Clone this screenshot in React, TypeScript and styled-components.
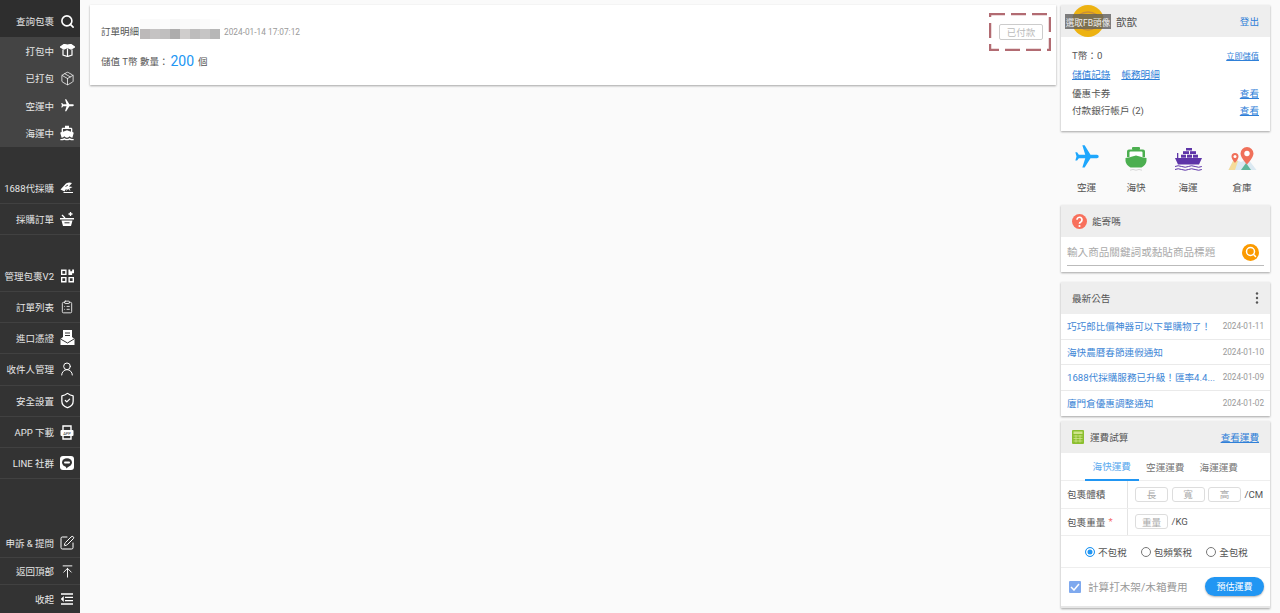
import React from "react";
import styled, { createGlobalStyle } from "styled-components";
import { MdDirectionsBoat, MdFlight } from "react-icons/md";
import {
  ArrowUpToLine,
  ClipboardList,
  Package,
  Search,
  ShieldCheck,
  SquarePen,
  UserRound,
} from "lucide-react";

const GlobalStyle = createGlobalStyle`
  html, body {
    margin: 0;
    padding: 0;
    height: 613px;
    overflow: hidden;
    background: #fafafa;
    font-family: Roboto, "Noto Sans CJK TC", "Liberation Sans", sans-serif;
  }
  * { box-sizing: border-box; }
`;

const Page = styled.div`
  display: flex;
  width: 1280px;
  height: 613px;
`;

const Sidebar = styled.nav`
  width: 80px;
  height: 613px;
  flex-shrink: 0;
  display: flex;
  flex-direction: column;
  background: #333;
  color: #e6e6e6;
`;

const NavGroup = styled.div<{ $light?: boolean; $gap?: number; $bottom?: boolean }>`
  background: ${(p) => (p.$light ? "#444" : "transparent")};
  margin-top: ${(p) => (p.$bottom ? "auto" : `${p.$gap ?? 0}px`)};
`;

const NavItem = styled.div<{ $h: number; $top?: number; $dark?: boolean; $line?: boolean }>`
  height: ${(p) => p.$h}px;
  padding-top: ${(p) => p.$top ?? 0}px;
  padding-right: 3px;
  display: flex;
  align-items: center;
  justify-content: flex-end;
  gap: 3px;
  font-size: 9.5px;
  white-space: nowrap;
  background: ${(p) => (p.$dark ? "#2e2e2e" : "transparent")};
  border-bottom: ${(p) => (p.$line ? "1px solid #414141" : "none")};
`;

const NavIcon = styled.span`
  width: 20px;
  height: 20px;
  display: flex;
  align-items: center;
  justify-content: center;
  color: #fff;
`;

const PlaneIcon = styled(MdFlight)`
  transform: rotate(90deg);
  flex-shrink: 0;
`;

const Main = styled.main`
  flex: 1;
  padding: 5px 5px 0 10px;
`;

const OrderCard = styled.section`
  position: relative;
  height: 80px;
  background: #fff;
  box-shadow: 0 1px 2px rgba(0, 0, 0, 0.35);
  padding: 14px 11px;
  color: #555;
  font-size: 9.5px;
`;

const OrderTitle = styled.div`
  display: flex;
  align-items: flex-end;
  height: 20px;
  line-height: 14px;
`;

const Mosaic = styled.div`
  display: grid;
  grid-template-columns: repeat(8, 10px);
  grid-template-rows: 10px 10px;
  margin: 0 4px 0 1px;
`;

const MosaicCell = styled.span<{ $c: string }>`
  background: ${(p) => p.$c};
`;

const OrderTime = styled.span`
  color: #999;
  font-size: 8.3px;
`;

const OrderLine = styled.div`
  margin-top: 11px;
  display: flex;
  align-items: center;
  height: 22px;
`;

const BigNumber = styled.span`
  color: #2196f3;
  font-size: 14px;
  margin: 0 4px 0 2px;
`;

const PaidMark = styled.div`
  position: absolute;
  top: 8px;
  right: 5px;
  width: 62px;
  height: 38px;
  display: flex;
  align-items: center;
  justify-content: flex-end;
  padding-right: 8px;
`;

const PaidOutline = styled.svg`
  position: absolute;
  inset: 0;
`;

const PaidTag = styled.span`
  width: 44px;
  height: 16px;
  border: 1px solid #ccc;
  border-radius: 2px;
  color: #bbb;
  font-size: 9.5px;
  display: flex;
  align-items: center;
  justify-content: center;
`;

const RightColumn = styled.aside`
  width: 219px;
  flex-shrink: 0;
  padding: 5px 10px 0 0;
  display: flex;
  flex-direction: column;
`;

const Card = styled.section<{ $mb?: number }>`
  flex-shrink: 0;
  background: #fff;
  box-shadow: 0 1px 2px rgba(0, 0, 0, 0.35);
  margin-bottom: ${(p) => p.$mb ?? 10}px;
  color: #555;
  font-size: 9.6px;
`;

const CardHeader = styled.header<{ $h?: number }>`
  height: ${(p) => p.$h ?? 32}px;
  background: #eee;
  display: flex;
  align-items: center;
  padding: 0 11px;
  color: #555;
  font-size: 9.6px;
`;

const Spread = styled.div`
  flex: 1;
`;

const BlueLink = styled.a<{ $small?: boolean }>`
  color: #2f80d8;
  text-decoration: underline;
  font-size: ${(p) => (p.$small ? "8.2px" : "9.6px")};
`;

const PlainLink = styled.a`
  color: #2f80d8;
  font-size: 9.6px;
`;

const AvatarWrap = styled.div`
  position: relative;
  width: 46px;
  height: 32px;
  margin: 0 5px 0 -7px;
  display: flex;
  justify-content: center;
`;

const AvatarLabel = styled.span`
  position: absolute;
  left: 0;
  top: 9px;
  width: 46px;
  height: 15px;
  background: rgba(95, 95, 95, 0.8);
  color: #eee;
  font-size: 8.6px;
  display: flex;
  align-items: center;
  justify-content: center;
  white-space: nowrap;
`;

const UserName = styled.span`
  font-size: 10.5px;
`;

const UserBody = styled.div`
  height: 94px;
  padding: 9px 11px 0;
`;

const UserRow = styled.div<{ $h: number }>`
  height: ${(p) => p.$h}px;
  display: flex;
  align-items: center;
  justify-content: space-between;
`;

const LinkGroup = styled.div`
  display: flex;
  gap: 11px;
`;

const TransportRow = styled.div`
  flex-shrink: 0;
  height: 50px;
  margin-bottom: 10px;
  display: grid;
  grid-template-columns: 51px 48px 56px 52px;
  justify-items: center;
`;

const TransportItem = styled.div`
  display: flex;
  flex-direction: column;
  align-items: center;
  gap: 9px;
  color: #555;
  font-size: 9.6px;
`;

const TransportIcon = styled.div`
  width: 30px;
  height: 26px;
  display: flex;
  align-items: flex-end;
  justify-content: center;
`;

const HelpTitle = styled.span`
  margin-left: 5px;
`;

const SearchRow = styled.div`
  height: 35px;
  padding: 0 6px;
`;

const SearchInner = styled.div`
  height: 29px;
  border-bottom: 1px solid #bbb;
  display: flex;
  align-items: center;
  justify-content: space-between;
  color: #aaa;
  font-size: 10.6px;
  padding-right: 5px;
`;

const SearchBadge = styled.span`
  width: 17px;
  height: 17px;
  border-radius: 50%;
  background: #fb9a00;
  color: #fff;
  display: flex;
  align-items: center;
  justify-content: center;
  margin-top: 2px;
`;

const NewsRow = styled.div<{ $last?: boolean }>`
  height: 25.5px;
  display: flex;
  align-items: center;
  justify-content: space-between;
  padding: 0 6px;
  border-bottom: ${(p) => (p.$last ? "none" : "1px solid #eaeaea")};
`;

const NewsTitle = styled.span`
  color: #3d86d6;
  font-size: 9.6px;
  white-space: nowrap;
`;

const NewsDate = styled.span`
  color: #999;
  font-size: 8.2px;
`;

const CalcIcon = styled.div`
  margin-right: 6px;
  display: flex;
`;

const CalcCard = styled(Card)`
  margin-bottom: 0;
  height: 187px;
  border-bottom: 2px solid #e6e6e6;
`;

const Tabs = styled.div`
  height: 28px;
  display: flex;
  padding-left: 24px;
  border-bottom: 1px solid #eee;
`;

const Tab = styled.div<{ $active?: boolean }>`
  width: 53.5px;
  display: flex;
  align-items: center;
  justify-content: center;
  color: ${(p) => (p.$active ? "#5aa9ee" : "#777")};
  font-size: 9.6px;
  border-bottom: ${(p) => (p.$active ? "2px solid #2196f3" : "none")};
  margin-bottom: -1px;
`;

const FormRow = styled.div`
  height: 27.5px;
  display: flex;
  border-bottom: 1px solid #eee;
`;

const FormLabel = styled.div`
  width: 67px;
  padding-left: 6px;
  display: flex;
  align-items: center;
  border-right: 1px solid #e4e4e4;
`;

const Required = styled.span`
  color: #f56c6c;
  margin-left: 3px;
`;

const FormFields = styled.div`
  flex: 1;
  padding-left: 7px;
  display: flex;
  align-items: center;
  gap: 3.5px;
`;

const FieldBox = styled.span`
  width: 33px;
  height: 15px;
  border: 1px solid #ddd;
  border-radius: 3px;
  color: #aaa;
  display: flex;
  align-items: center;
  justify-content: center;
  font-size: 9.6px;
`;

const RadioRow = styled.div`
  height: 32px;
  display: flex;
  align-items: center;
  padding-left: 24px;
  gap: 14px;
  border-bottom: 1px solid #eee;
`;

const RadioItem = styled.label`
  display: flex;
  align-items: center;
  gap: 3px;
`;

const RadioDot = styled.span<{ $on?: boolean }>`
  width: 10px;
  height: 10px;
  border-radius: 50%;
  border: 1px solid ${(p) => (p.$on ? "#2196f3" : "#777")};
  background: ${(p) => (p.$on ? "#2196f3" : "#fff")};
  box-shadow: ${(p) => (p.$on ? "inset 0 0 0 1.5px #fff" : "none")};
`;

const SubmitRow = styled.div`
  height: 37px;
  display: flex;
  align-items: center;
  padding: 0 6px 0 8px;
  color: #999;
  font-size: 10.6px;
`;

const CheckBox = styled.span`
  width: 12px;
  height: 12px;
  margin-right: 7px;
  background: #7fa9ee;
  border-radius: 1px;
  display: flex;
  align-items: center;
  justify-content: center;
`;

const EstimateButton = styled.button`
  margin-left: auto;
  width: 59px;
  height: 19px;
  border: none;
  border-radius: 10px;
  background: #2196f3;
  color: #fff;
  font: inherit;
  font-size: 9px;
  padding: 0;
  box-shadow: 0 1px 2px rgba(0, 0, 0, 0.3);
`;

const AvatarFace = () => (
  <svg width="32" height="32" viewBox="0 0 32 32" fill="none">
    <circle cx="16" cy="16" r="16" fill="#edb211" />
    <path d="M7 10q9-6 18 0M8 22q8 6 16 0" stroke="#c98f3a" strokeWidth="1.5" />
  </svg>
);

const OpenBoxIcon = () => (
  <svg width="15" height="13" viewBox="0 0 15 13" fill="none" stroke="#fff" strokeWidth="1.200">
    <path d="M7.500 1 11 .5 14.500 3 11 5 7.500 3.500 4 5 .5 3 4 .5z" fill="#fff" />
    <path d="M3 5.500V11l4.500 1.500L12 11V5.500M7.500 4.500v8" />
  </svg>
);

const Purchase1688 = () => (
  <svg width="14" height="13" viewBox="0 0 14 13" fill="#fff">
    <path d="M0.500 7.500 6 1.500Q9 0 12 1L9 4.500 12.500 5 9 7H6L4.500 9.500z" />
    <path d="M3.500 10.500h9.500M6.500 8.500a1.700 1.700 0 1 1 3.400 0" stroke="#fff" strokeWidth="1" fill="none" />
    <path d="M5.500 4.500 8 3" stroke="#333" strokeWidth="0.900" />
  </svg>
);

const BasketIcon = () => (
  <svg width="14" height="14" viewBox="0 0 14 14" fill="#fff" stroke="none">
    <path d="M10.500 0v4M8.500 2h4M2 3l3 3" stroke="#fff" strokeWidth="1.300" />
    <path d="M0 6h14v1.500H0z" />
    <path d="M1.500 8.500h11L11 14H3z" />
    <path d="M4.500 10.800h5" stroke="#333" strokeWidth="1" />
  </svg>
);

const QrIcon = () => (
  <svg width="13" height="14" viewBox="0 0 14 14" fill="#fff">
    <path d="M0 0h6v6H0z M1.500 1.500v3h3v-3z" fillRule="evenodd" />
    <path d="M8 0h2v2h2V0h2v4h-2v2H8z" />
    <path d="M0 8h6v6H0z M1.500 9.500v3h3v-3z" fillRule="evenodd" />
    <path d="M8 8h6v6H8z M9.500 9.500v3h3v-3z" fillRule="evenodd" />
  </svg>
);

const VoucherIcon = () => (
  <svg width="15" height="16" viewBox="0 0 15 16" fill="#fff">
    <path d="M3 0h9v7l2.500 2v6H.5V9L3 7z" />
    <path d="M5 3h5M5 5.500h5" stroke="#333" strokeWidth="1" />
    <path d="M.5 9l7 4 6.500-4" stroke="#333" strokeWidth="1" fill="none" />
  </svg>
);

const AppIcon = () => (
  <svg width="14" height="15" viewBox="0 0 14 15" fill="none" stroke="#fff" strokeWidth="1.400">
    <path d="M3 5V1h8v4" />
    <rect x="0.500" y="5" width="13" height="6" rx="1" fill="#fff" stroke="none" />
    <path d="M3 11v3h8v-3" />
    <text x="7" y="9.500" textAnchor="middle" fontSize="4" fill="#333" stroke="none">APP</text>
  </svg>
);

const LineIcon = () => (
  <svg width="14" height="14" viewBox="0 0 14 14">
    <rect width="14" height="14" rx="3" fill="#fff" />
    <ellipse cx="7" cy="6.500" rx="5" ry="4.200" fill="#333" />
    <path d="M5.500 10l1 2.500 2.500-2.500z" fill="#333" />
    <rect x="4" y="5.500" width="6" height="2" rx="1" fill="#fff" />
  </svg>
);

const CollapseIcon = () => (
  <svg width="14" height="12" viewBox="0 0 14 12" fill="none" stroke="#fff" strokeWidth="1.300">
    <path d="M1 1h12M5 4.300h8M5 7.600h8M1 11h12" />
    <path d="M3.500 3.500 1 6l2.500 2.500z" fill="#fff" strokeWidth="0.500" />
  </svg>
);

const GreenShip = () => (
  <svg width="22" height="24" viewBox="0 0 22 24">
    <rect x="7" y="0" width="8" height="3" rx="1" fill="#4caf50" />
    <path d="M4 2.500h14a2 2 0 0 1 2 2V10H2V4.500a2 2 0 0 1 2-2z" fill="#4caf50" />
    <path d="M0.500 11 11 9l10.500 2v3c0 2.500-2.500 5-5 6.500h-11c-2.500-1.500-5-4-5-6.500z" fill="#4caf50" />
    <path d="M5.500 4.500h11a1 1 0 0 1 1 1v4.800L11 8.500 4.500 10.300V5.500a1 1 0 0 1 1-1z" fill="#fff" />
    <path d="M5 23.200q3-1.500 6 0q3-1.500 6 0" stroke="#ccc" strokeWidth="0.800" fill="none" />
  </svg>
);

const PurpleShip = () => (
  <svg width="27" height="23" viewBox="0 0 27 23" fill="#5e35a8">
    <rect x="11" y="0" width="6" height="2.500" />
    <rect x="8" y="3.200" width="6" height="2.800" />
    <rect x="15" y="3.200" width="6" height="2.800" />
    <rect x="2" y="5" width="1.300" height="5" />
    <rect x="6" y="6.700" width="5" height="3" />
    <rect x="12" y="6.700" width="5" height="3" />
    <rect x="18" y="6.700" width="5" height="3" />
    <path d="M0 10h27l-3 6.500H3z" />
    <path d="M0 18.500q3-1.500 6.700 0t6.700 0 6.700 0 6.700 0" stroke="#5e35a8" strokeWidth="1" fill="none" />
    <path d="M0 21.500q3-1.500 6.700 0t6.700 0 6.700 0 6.700 0" stroke="#5e35a8" strokeWidth="1" fill="none" />
  </svg>
);

const MapPins = () => (
  <svg width="29" height="24" viewBox="0 0 29 24">
    <path d="M0.500 23 6 12l7 3 7-3 8.500 11z" fill="#dbe9f2" />
    <path d="M0.500 23 6 12l4 2-3 9z" fill="#f5dc9a" />
    <path d="M13 23l5-7 5 7z" fill="#5fb59a" />
    <path d="M7 6a3.500 3.500 0 0 1 3.500 3.500C10.500 12 7 16 7 16s-3.500-4-3.500-6.500A3.500 3.500 0 0 1 7 6z" fill="#f0705a" />
    <circle cx="7" cy="9.500" r="1.500" fill="#fff" />
    <path d="M19 0a6.500 6.500 0 0 1 6.500 6.500c0 4-6.500 11-6.500 11s-6.500-7-6.500-11A6.500 6.500 0 0 1 19 0z" fill="#f0705a" />
    <circle cx="19" cy="6.500" r="2.700" fill="#fff" />
  </svg>
);

const HelpIcon = () => (
  <svg width="15" height="15" viewBox="0 0 15 15">
    <circle cx="7.500" cy="7.500" r="7.500" fill="#f8705c" />
    <path d="M5 5.800a2.500 2.500 0 1 1 3.800 2.100c-.9.500-1.300.9-1.300 1.800" stroke="#fff" strokeWidth="1.700" fill="none" />
    <circle cx="7.500" cy="12" r="1.100" fill="#fff" />
  </svg>
);

const DotsIcon = () => (
  <svg width="4" height="12" viewBox="0 0 4 12" fill="#555">
    <circle cx="2" cy="1.500" r="1.200" />
    <circle cx="2" cy="6" r="1.200" />
    <circle cx="2" cy="10.500" r="1.200" />
  </svg>
);

const CalculatorIcon = () => (
  <svg width="12" height="14" viewBox="0 0 12 14">
    <rect width="12" height="14" rx="1" fill="#8bbf2f" />
    <rect x="1.500" y="1.500" width="9" height="2.500" fill="#cfe58a" />
    <path d="M1.500 6h9M1.500 8.500h9M1.500 11h9M4 5v7.500M8 5v7.500" stroke="#cfe58a" strokeWidth="0.800" />
  </svg>
);

const CheckMark = () => (
  <svg width="10" height="8" viewBox="0 0 10 8" fill="none" stroke="#fff" strokeWidth="1.500">
    <path d="M1 4l3 3 5-6" />
  </svg>
);

const mosaic = [
  "#fbfbfb", "#fafafa", "#fcfcfc", "#f8f8f8", "#fafafa", "#f9f9f9", "#fbfbfb", "#fdfdfd",
  "#bcb9b9", "#c5c3c3", "#c0bfbf", "#adacac", "#cfcdcc", "#bdbcbc", "#c6c5c5", "#b7b7b7",
];

const news = [
  { title: "巧巧郎比價神器可以下單購物了！", date: "2024-01-11" },
  { title: "海快農曆春節連假通知", date: "2024-01-10" },
  { title: "1688代採購服務已升級！匯率4.4...", date: "2024-01-09" },
  { title: "廈門倉優惠調整通知", date: "2024-01-02" },
];

export default function App() {
  return (
    <Page>
      <GlobalStyle />
      <Sidebar>
        <NavItem $h={37} $top={5} $dark>
          查詢包裹<NavIcon><Search size={15} strokeWidth={2.6} /></NavIcon>
        </NavItem>
        <NavGroup $light>
          <NavItem $h={27.5}>打包中<NavIcon><OpenBoxIcon /></NavIcon></NavItem>
          <NavItem $h={27.5}>已打包<NavIcon><Package size={15} strokeWidth={1.2} /></NavIcon></NavItem>
          <NavItem $h={27.5}>空運中<NavIcon><PlaneIcon size={15} /></NavIcon></NavItem>
          <NavItem $h={27.5}>海運中<NavIcon><MdDirectionsBoat size={16} /></NavIcon></NavItem>
        </NavGroup>
        <NavGroup $gap={26}>
          <NavItem $h={31} $line>1688代採購<NavIcon><Purchase1688 /></NavIcon></NavItem>
          <NavItem $h={31} $line>採購訂單<NavIcon><BasketIcon /></NavIcon></NavItem>
        </NavGroup>
        <NavGroup $gap={25}>
          <NavItem $h={32} $line>管理包裹V2<NavIcon><QrIcon /></NavIcon></NavItem>
          <NavItem $h={31} $line>訂單列表<NavIcon><ClipboardList size={14} strokeWidth={1.4} /></NavIcon></NavItem>
          <NavItem $h={31} $line>進口憑證<NavIcon><VoucherIcon /></NavIcon></NavItem>
          <NavItem $h={31.5} $line>收件人管理<NavIcon><UserRound size={16} strokeWidth={1.5} /></NavIcon></NavItem>
          <NavItem $h={31.5} $line>安全設置<NavIcon><ShieldCheck size={17} strokeWidth={1.8} /></NavIcon></NavItem>
          <NavItem $h={31} $line>APP 下載<NavIcon><AppIcon /></NavIcon></NavItem>
          <NavItem $h={31} $line>LINE 社群<NavIcon><LineIcon /></NavIcon></NavItem>
        </NavGroup>
        <NavGroup $bottom>
          <NavItem $h={29} $line>申訴 &amp; 提問<NavIcon><SquarePen size={16} strokeWidth={1.5} /></NavIcon></NavItem>
          <NavItem $h={27} $line>返回頂部<NavIcon><ArrowUpToLine size={15} strokeWidth={1.5} /></NavIcon></NavItem>
          <NavItem $h={28}>收起<NavIcon><CollapseIcon /></NavIcon></NavItem>
        </NavGroup>
      </Sidebar>

      <Main>
        <OrderCard>
          <OrderTitle>
            訂單明細
            <Mosaic>
              {mosaic.map((c, i) => (
                <MosaicCell key={i} $c={c} />
              ))}
            </Mosaic>
            <OrderTime>2024-01-14 17:07:12</OrderTime>
          </OrderTitle>
          <OrderLine>
            儲值 T幣 數量：<BigNumber>200</BigNumber>個
          </OrderLine>
          <PaidMark>
            <PaidOutline width="62" height="38" viewBox="0 0 62 38" fill="none">
              <rect x="1" y="1" width="60" height="36" stroke="#b26b72" strokeWidth="2.500" strokeDasharray="15 6" />
            </PaidOutline>
            <PaidTag>已付款</PaidTag>
          </PaidMark>
        </OrderCard>
      </Main>

      <RightColumn>
        <Card $mb={14}>
          <CardHeader>
            <AvatarWrap>
              <AvatarFace />
              <AvatarLabel>選取FB頭像</AvatarLabel>
            </AvatarWrap>
            <UserName>歆歆</UserName>
            <Spread />
            <PlainLink>登出</PlainLink>
          </CardHeader>
          <UserBody>
            <UserRow $h={17}>
              <span>T幣：0</span>
              <BlueLink $small>立即儲值</BlueLink>
            </UserRow>
            <UserRow $h={21}>
              <LinkGroup>
                <BlueLink>儲值記錄</BlueLink>
                <BlueLink>帳務明細</BlueLink>
              </LinkGroup>
            </UserRow>
            <UserRow $h={18}>
              <span>優惠卡券</span>
              <BlueLink>查看</BlueLink>
            </UserRow>
            <UserRow $h={16}>
              <span>付款銀行帳戶 (2)</span>
              <BlueLink>查看</BlueLink>
            </UserRow>
          </UserBody>
        </Card>

        <TransportRow>
          <TransportItem><TransportIcon><PlaneIcon size={28} color="#1ea7fd" /></TransportIcon>空運</TransportItem>
          <TransportItem><TransportIcon><GreenShip /></TransportIcon>海快</TransportItem>
          <TransportItem><TransportIcon><PurpleShip /></TransportIcon>海運</TransportItem>
          <TransportItem><TransportIcon><MapPins /></TransportIcon>倉庫</TransportItem>
        </TransportRow>

        <Card>
          <CardHeader>
            <HelpIcon />
            <HelpTitle>能寄嗎</HelpTitle>
          </CardHeader>
          <SearchRow>
            <SearchInner>
              輸入商品關鍵詞或黏貼商品標題
              <SearchBadge><Search size={12} strokeWidth={3} /></SearchBadge>
            </SearchInner>
          </SearchRow>
        </Card>

        <Card $mb={5}>
          <CardHeader>
            最新公告
            <Spread />
            <DotsIcon />
          </CardHeader>
          {news.map((n, i) => (
            <NewsRow key={n.date} $last={i === news.length - 1}>
              <NewsTitle>{n.title}</NewsTitle>
              <NewsDate>{n.date}</NewsDate>
            </NewsRow>
          ))}
        </Card>

        <CalcCard>
          <CardHeader>
            <CalcIcon><CalculatorIcon /></CalcIcon>
            運費試算
            <Spread />
            <BlueLink>查看運費</BlueLink>
          </CardHeader>
          <Tabs>
            <Tab $active>海快運費</Tab>
            <Tab>空運運費</Tab>
            <Tab>海運運費</Tab>
          </Tabs>
          <FormRow>
            <FormLabel>包裹體積</FormLabel>
            <FormFields>
              <FieldBox>長</FieldBox>
              <FieldBox>寬</FieldBox>
              <FieldBox>高</FieldBox>
              /CM
            </FormFields>
          </FormRow>
          <FormRow>
            <FormLabel>包裹重量<Required>*</Required></FormLabel>
            <FormFields>
              <FieldBox>重量</FieldBox>
              /KG
            </FormFields>
          </FormRow>
          <RadioRow>
            <RadioItem><RadioDot $on />不包稅</RadioItem>
            <RadioItem><RadioDot />包頻繁稅</RadioItem>
            <RadioItem><RadioDot />全包稅</RadioItem>
          </RadioRow>
          <SubmitRow>
            <CheckBox><CheckMark /></CheckBox>
            計算打木架/木箱費用
            <EstimateButton>預估運費</EstimateButton>
          </SubmitRow>
        </CalcCard>
      </RightColumn>
    </Page>
  );
}
